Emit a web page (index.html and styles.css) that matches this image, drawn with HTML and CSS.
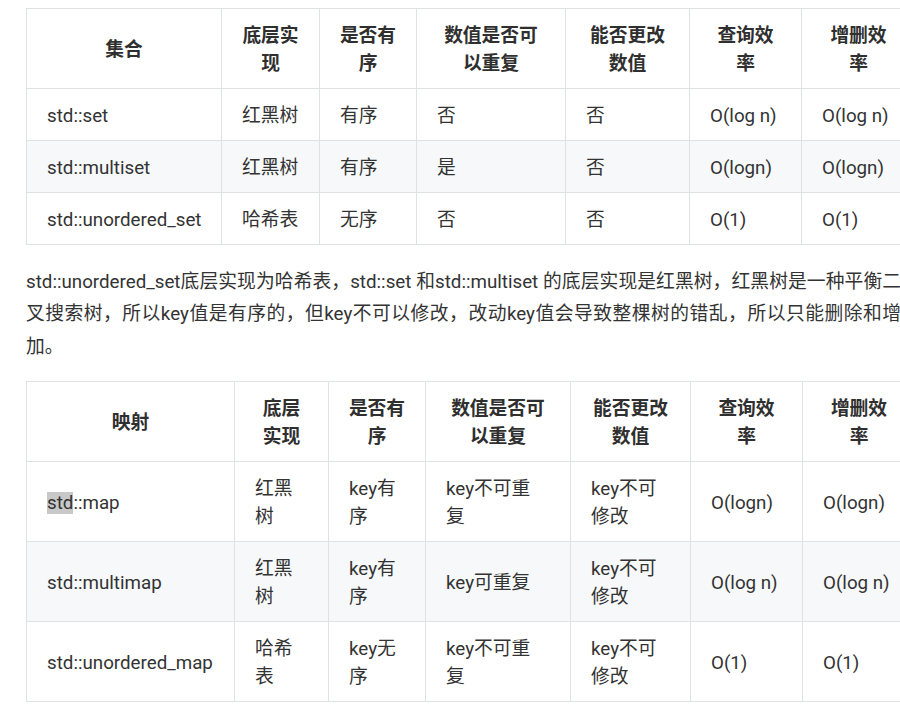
FILE: index.html
```html
<!DOCTYPE html>
<html lang="zh-CN">
<head>
<meta charset="utf-8">
<title>set / map</title>
<link rel="stylesheet" href="styles.css">
</head>
<body>
<div class="article">
  <table class="grid">
    <colgroup>
      <col style="width:195px"><col style="width:98px"><col style="width:97px"><col style="width:149px"><col style="width:124px"><col style="width:112px"><col style="width:114px">
    </colgroup>
    <thead>
      <tr><th>集合</th><th>底层实现</th><th>是否有序</th><th>数值是否可以重复</th><th>能否更改数值</th><th>查询效率</th><th>增删效率</th></tr>
    </thead>
    <tbody>
      <tr><td>std::set</td><td>红黑树</td><td>有序</td><td>否</td><td>否</td><td>O(log n)</td><td>O(log n)</td></tr>
      <tr><td>std::multiset</td><td>红黑树</td><td>有序</td><td>是</td><td>否</td><td>O(logn)</td><td>O(logn)</td></tr>
      <tr><td>std::unordered_set</td><td>哈希表</td><td>无序</td><td>否</td><td>否</td><td>O(1)</td><td>O(1)</td></tr>
    </tbody>
  </table>
  <p class="text">std::unordered_set底层实现为哈希表，std::set 和std::multiset 的底层实现是红黑树，红黑树是一种平衡二叉搜索树，所以key值是有序的，但key不可以修改，改动key值会导致整棵树的错乱，所以只能删除和增加。</p>
  <table class="grid grid-map">
    <colgroup>
      <col style="width:208px"><col style="width:94px"><col style="width:97px"><col style="width:145px"><col style="width:120px"><col style="width:112px"><col style="width:113px">
    </colgroup>
    <thead>
      <tr><th>映射</th><th>底层实现</th><th>是否有序</th><th>数值是否可以重复</th><th>能否更改数值</th><th>查询效率</th><th>增删效率</th></tr>
    </thead>
    <tbody>
      <tr><td><span class="hl">std</span>::map</td><td>红黑树</td><td>key有序</td><td>key不可重复</td><td>key不可修改</td><td>O(logn)</td><td>O(logn)</td></tr>
      <tr><td>std::multimap</td><td>红黑树</td><td>key有序</td><td>key可重复</td><td>key不可修改</td><td>O(log n)</td><td>O(log n)</td></tr>
      <tr><td>std::unordered_map</td><td>哈希表</td><td>key无序</td><td>key不可重复</td><td>key不可修改</td><td>O(1)</td><td>O(1)</td></tr>
    </tbody>
  </table>
</div>
</body>
</html>
```

FILE: styles.css
```css
html, body {
  margin: 0;
  padding: 0;
  overflow: hidden;
  background: #ffffff;
}

body {
  font-family: Roboto, "Noto Sans CJK SC", sans-serif;
  font-size: 18.75px;
  color: #333333;
}

.article {
  width: 889px;
  padding: 8px 0 0 26px;
}

.grid {
  border-collapse: collapse;
  table-layout: fixed;
  width: 889px;
  line-height: 28px;
}

.grid th,
.grid td {
  border: 1px solid #dfe2e5;
  padding: 12.5px 19.5px 10.5px;
  vertical-align: middle;
}

.grid td {
  padding-left: 20px;
  text-align: left;
}

.grid th {
  font-weight: bold;
  text-align: center;
  color: #2f2f2f;
}

.grid-map td:nth-child(4) {
  padding-right: 24px;
}

.grid tbody tr:nth-child(2) {
  background: #f6f8fa;
}

.text {
  width: 875px;
  margin: 20.5px 0 18px;
  line-height: 32.5px;
  text-align: justify;
}

.hl {
  background: #c8c8c8;
}
```
